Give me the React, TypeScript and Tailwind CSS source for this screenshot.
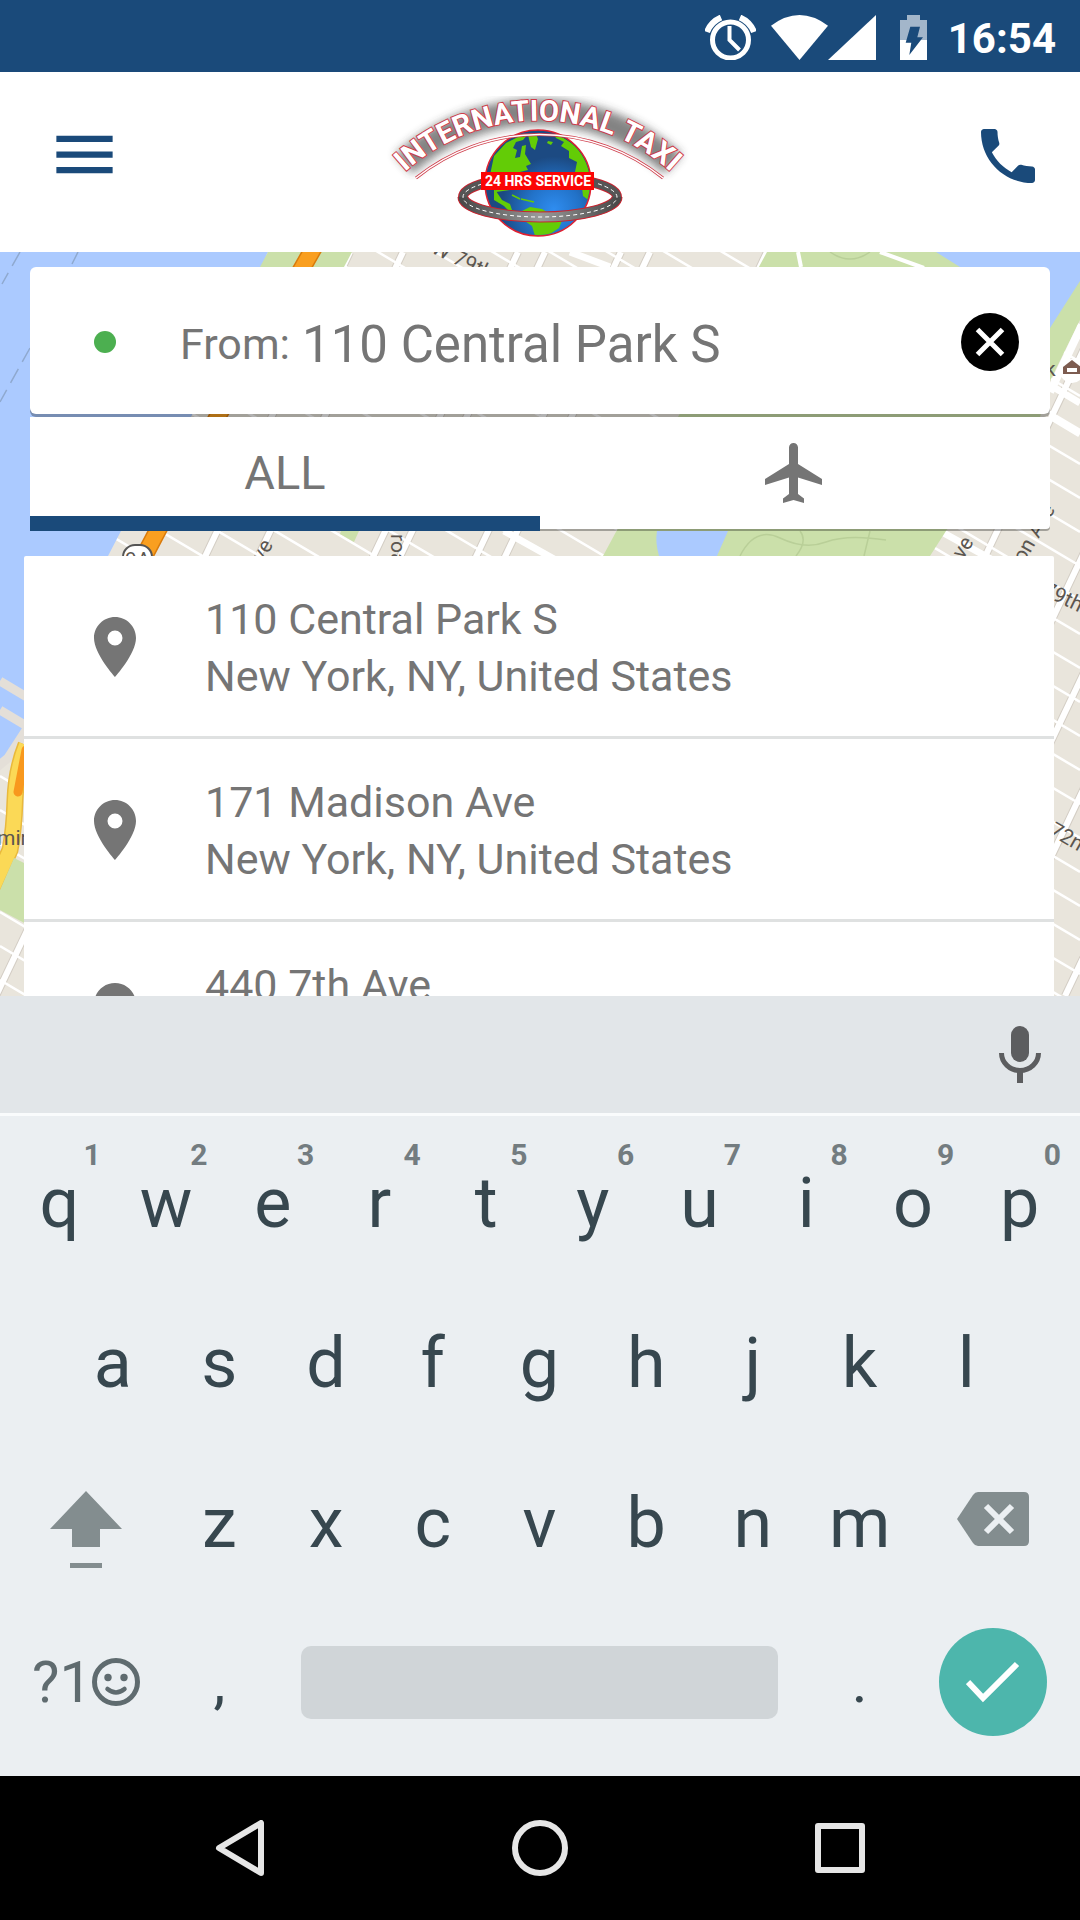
import { useState } from "react";
import type { ReactNode } from "react";
import { MdLocationOn, MdMenu, MdPhone } from "react-icons/md";

type Tab = "all" | "airports";

const PLACES = [
  { street: "110 Central Park S", city: "New York, NY, United States" },
  { street: "171 Madison Ave", city: "New York, NY, United States" },
  { street: "440 7th Ave", city: "New York, NY, United States" }
];

const ROW_1 = ["q", "w", "e", "r", "t", "y", "u", "i", "o", "p"];
const ROW_2 = ["a", "s", "d", "f", "g", "h", "j", "k", "l"];
const ROW_3 = ["z", "x", "c", "v", "b", "n", "m"];

function StatusBar() {
  return (
    <div className="flex h-[72px] shrink-0 items-center justify-end bg-[#1a4a7a] pt-0.5 pr-6 text-white">
      <svg width="51" height="45" viewBox="0 0 51 45" fill="none" stroke="currentColor" aria-hidden>
        <circle cx="25.5" cy="25" r="18" strokeWidth="5" />
        <path d="M24.500 11v14l10 10" strokeWidth="4" />
        <path d="M2 17A26 26 0 0 1 16 2.500M49 17A26 26 0 0 0 35 2.500" strokeWidth="6" />
      </svg>
      <svg className="ml-[15px]" width="57" height="45" viewBox="0 0 57 45" fill="currentColor" aria-hidden>
        <path d="M0 10.700Q28.500-10.700 57 10.700L28.500 45Z" />
      </svg>
      <svg width="48" height="45" viewBox="0 0 48 45" fill="currentColor" aria-hidden>
        <path d="M48 0v45H0Z" />
      </svg>
      <svg className="ml-6" width="27" height="45" viewBox="0 0 27 45" fill="currentColor" aria-hidden>
        <path d="M7 0h13v5h7v20H0V5h7Z" opacity="0.6" />
        <path d="M0 25h27v20H0Z" />
        <path d="M10.300 11.700H20L17.300 22.300H23L9.300 40l2-12.300H5.700Z" fill="#1a4a7a" />
      </svg>
      <span className="ml-[21px] pt-1 text-[42px] leading-[60px] font-bold">16:54</span>
    </div>
  );
}

function Logo() {
  return (
    <svg width="340" height="170" viewBox="0 0 340 170" role="img" aria-label="International Taxi">
      <defs>
        <radialGradient id="sea" cx="0.65" cy="0.75" r="0.5">
          <stop offset="0" stopColor="#2f8df0" />
          <stop offset="0.5" stopColor="#2272c8" />
          <stop offset="1" stopColor="#1c4a82" />
        </radialGradient>
        <linearGradient id="road" x1="0" x2="1" y1="0" y2="0">
          <stop offset="0" stopColor="#4a4a4a" />
          <stop offset="0.5" stopColor="#9a9a9a" />
          <stop offset="1" stopColor="#4a4a4a" />
        </linearGradient>
        <filter id="glow" x="-10%" y="-30%" width="120%" height="160%">
          <feGaussianBlur stdDeviation="5" />
        </filter>
        <clipPath id="globe">
          <circle cx="168" cy="103" r="52" />
        </clipPath>
        <path id="arch" d="M32 95A197 197 0 0 1 304 95" />
      </defs>

      <path d="M34 84A200 200 0 0 1 303 84" fill="none" stroke="#333" strokeWidth="26" opacity="0.6" filter="url(#glow)" />

      <ellipse cx="170" cy="117" rx="77" ry="20" fill="none" stroke="#c8232f" strokeWidth="10" />
      <ellipse cx="170" cy="117" rx="77" ry="20" fill="none" stroke="#555" strokeWidth="8" />
      <circle cx="168" cy="103" r="53" fill="url(#sea)" stroke="#e02030" strokeWidth="1.5" />
      <g clipPath="url(#globe)" fill="#63cc06">
        <path d="M120 95L124 76 136 63 150 56 158 54 153 60 146 62 143 68 147 70 145 78 150 77 152 66 156 65 155 74 161 84 156 86 158 90 150 92 150 104 140 110 126 112Z" />
        <path d="M158 55L166 54 168 59 165 70 161 67ZM178 61l5 1-2 3-4-2Z" />
        <path d="M184 54q18 6 30 22l7 16v30l-8-6-2-16-6-8 2-10-8-4 0-7-8-5 3-4-8-4Z" />
        <path d="M124 108l8 12 8 4 2 6 10 3v4l-10-3-8-8-10-6Z" />
        <path d="M142 115l8 4M151 119l13 3" stroke="#63cc06" strokeWidth="1.5" />
        <path d="M152 131l8-4 12 2 10 6 11 3-4 10-9 6-7 8-8-6-3-10-10-7Z" />
      </g>
      <path d="M93 117C93 128 128 137 170 137S247 128 247 117" fill="none" stroke="#c8232f" strokeWidth="11" />
      <path d="M93 117C93 128 128 137 170 137S247 128 247 117" fill="none" stroke="url(#road)" strokeWidth="9" />
      <path d="M112 104Q93 110 93 117C93 128 128 137 170 137S247 128 247 117Q247 110 226 103" fill="none" stroke="#fff" strokeWidth="1" strokeDasharray="4 3" />

      <rect x="111" y="92" width="113" height="18" fill="#fb0505" />
      <text x="168" y="106" textAnchor="middle" fontFamily="Roboto, sans-serif" fontWeight="700" fontSize="14" fill="#fff">
        24 HRS SERVICE
      </text>

      <path d="M46 98A197 197 0 0 1 293 98" fill="none" stroke="#cf3b49" strokeWidth="3" />
      <path d="M46 98A197 197 0 0 1 293 98" fill="none" stroke="#fff" strokeWidth="1.5" />
      <text
        fontFamily="Roboto, sans-serif"
        fontWeight="700"
        fontSize="29"
        fill="#fff"
        stroke="#cf3b49"
        strokeWidth="2"
        paintOrder="stroke"
        textAnchor="middle"
      >
        <textPath href="#arch" startOffset="50%">
          INTERNATIONAL TAXI
        </textPath>
      </text>
    </svg>
  );
}

function Header() {
  return (
    <header className="grid h-[180px] shrink-0 grid-cols-[1fr_auto_1fr] items-center bg-white px-9 text-[#1a4a7a]">
      <button type="button" aria-label="Menu" className="justify-self-start pb-4 pl-[11px]">
        <MdMenu size={75} />
      </button>
      <div className="pt-1.5">
        <Logo />
      </div>
      <button type="button" aria-label="Call" className="justify-self-end pb-3">
        <MdPhone size={72} />
      </button>
    </header>
  );
}

// Streets run down to the right, avenues up to the right.
const STREETS = Array.from({ length: 44 }, (_, i) => -380 + i * 34);
const AVENUES = [240, 350, 403, 518, 545, 621, 650, 767, 1130, 1227, 1284, 1339, 1419];

function CityMap() {
  return (
    <svg
      className="absolute inset-0 size-full"
      viewBox="0 252 1080 744"
      preserveAspectRatio="xMidYMin slice"
      fontFamily="Roboto, sans-serif"
      fontSize="21"
      fill="#5b5650"
      aria-hidden
    >
      <rect y="252" width="1080" height="744" fill="#e9e5dc" />
      <g stroke="#d3cdc4" fill="none">
        {AVENUES.map((x) => (
          <path key={x} d={`M${x} 252L${x - 354} 996`} strokeWidth="8" />
        ))}
      </g>
      <g stroke="#fff" fill="none">
        {STREETS.map((y) => (
          <path key={y} d={`M0 ${y}L1080 ${y + 640}`} strokeWidth="2.5" />
        ))}
        {AVENUES.map((x) => (
          <path key={x} d={`M${x} 252L${x - 354} 996`} strokeWidth="6" />
        ))}
        <path d="M570 252l40 15M504 531l50 28M940 531l60 33M1050 385l30 18M1050 416l30 18" strokeWidth="7" />
      </g>

      <path d="M767 252H1080V320L1048 385 1040 417 946 531 930 556H603Z" fill="#cbe0aa" />
      <path d="M798 252l3 15M880 252l44 16" stroke="#fff" strokeWidth="4" />
      <path d="M830 252q20 14 40 0M740 556q15-30 40-18t46 4 60-2M870 531l-6 25M800 531q8 10-4 25" fill="none" stroke="#b9cf98" strokeWidth="1.5" />
      <path d="M936 252H1080V281L1050 328Q1020 290 960 267Z" fill="#abcaff" />
      <path d="M657 531h71l-11 25h-58q-4-14-2-25Z" fill="#abcaff" />
      <path d="M341 531h18l-5 11-14-8Z" fill="#cbe0aa" />
      <path d="M1082 325L1050 392" stroke="#fff" strokeWidth="8" />

      <path d="M0 252H268L191 417 121 531 108 556 24 740 8 762 0 766Z" fill="#abcaff" />
      <path d="M268 252h84l-8 15h-84Z" fill="#cbe0aa" />
      <path d="M20 252L2 284M78 252l-6 12M30 348L0 402" stroke="#8fa9cf" strokeWidth="1.5" strokeDasharray="16 8" />
      <path d="M0 681l30 18M0 710l30 18M-4 768L8 758 30 724" fill="none" stroke="#e4dfd8" strokeWidth="9" />
      <path d="M26 745Q16 770 15 800T10 850L-8 890" fill="none" stroke="#e9b93c" strokeWidth="17" />
      <path d="M26 745Q16 770 15 800T10 850L-8 890" fill="none" stroke="#fbd956" strokeWidth="14" />
      <path d="M26 750L18 792" stroke="#f8981d" strokeWidth="9" strokeLinecap="round" />
      <path d="M0 890L14 858 30 866V926L0 910Z" fill="#cbe0aa" />
      <path d="M321 235L219 414 139 566" fill="none" stroke="#d97b0c" strokeWidth="18" />
      <path d="M321 235L219 414 139 566" fill="none" stroke="#f99f20" strokeWidth="15" />

      <rect x="123" y="545" width="29" height="28" rx="12" fill="#fff" stroke="#555" strokeWidth="2" />
      <text x="125" y="567">9A</text>
      <text transform="translate(430 252) rotate(26)">W 79th St</text>
      <text transform="translate(263 563) rotate(-60)">ve</text>
      <text transform="translate(391 534) rotate(90)">roadway</text>
      <text transform="translate(963 560) rotate(-58)">ve</text>
      <text transform="translate(1024 564) rotate(-60)">on Ave</text>
      <text x="1045" y="376">k</text>
      <text x="-3" y="845">min</text>
      <text transform="translate(1041 594) rotate(26)">79th St</text>
      <text transform="translate(1048 834) rotate(30)">72nd St</text>
      <circle cx="1072" cy="371" r="12" fill="#fff" />
      <path d="M1063 367l9-7 9 7v7h-18Z" fill="#7d5c50" />
      <path d="M1067 368h10v4h-10Z" fill="#fff" />
    </svg>
  );
}

function PickupForm() {
  const [from, setFrom] = useState("110 Central Park S");

  return (
    <div className="relative flex h-[147px] items-center rounded-md bg-white pt-[3px] pr-[31px] pl-16 text-[#757575] shadow-[0_3px_0_rgba(0,0,0,0.3)]">
      <span className="size-[22px] shrink-0 rounded-full bg-[#4caf50]" />
      <label htmlFor="from" className="ml-16 pt-1 text-[43px] leading-[60px]">
        From:
      </label>
      <input
        id="from"
        type="text"
        value={from}
        onChange={(e) => setFrom(e.target.value)}
        className="ml-3 h-20 min-w-0 flex-1 bg-transparent pt-1 text-[51px] outline-none"
      />
      <button type="button" aria-label="Clear" onClick={() => setFrom("")}>
        <svg width="58" height="58" viewBox="0 0 58 58" aria-hidden>
          <circle cx="29" cy="29" r="29" fill="#000" />
          <path d="M16.500 16.500l25 25M41.500 16.500l-25 25" stroke="#fff" strokeWidth="5" />
        </svg>
      </button>
    </div>
  );
}

function Tabs({ tab, onChange }: { tab: Tab; onChange: (tab: Tab) => void }) {
  const items: { value: Tab; label: string; content: ReactNode }[] = [
    { value: "all", label: "All", content: "ALL" },
    {
      value: "airports",
      label: "Airports",
      content: (
        <svg width="72" height="72" viewBox="0 0 24 24" fill="currentColor" aria-hidden>
          <path d="M21 16v-2l-8-5V3.500c0-.83-.67-1.500-1.500-1.500S10 2.670 10 3.500V9l-8 5v2l8-2.500V19l-2 1.500V22l3.500-1 3.500 1v-1.500L13 19v-5.500l8 2.500z" />
        </svg>
      )
    }
  ];

  return (
    <div role="tablist" className="relative mt-[3px] grid h-28 grid-cols-2 rounded-b-sm bg-white text-[47px] text-[#757575] shadow-[0_2px_0_rgba(0,0,0,0.3)]">
      {items.map((item) => (
        <button
          key={item.value}
          type="button"
          role="tab"
          aria-label={item.label}
          aria-selected={tab === item.value}
          onClick={() => onChange(item.value)}
          className="relative flex items-center justify-center"
        >
          {item.content}
          {tab === item.value && (
            <span className="absolute inset-x-0 -bottom-0.5 h-[15px] bg-[#1a4a7a]" />
          )}
        </button>
      ))}
    </div>
  );
}

function PlaceList() {
  return (
    <ul className="relative mt-[27px] mr-[26px] ml-6 rounded-t-xs bg-white text-[43px] leading-[57px] text-[#757575]">
      {PLACES.map((place) => (
        <li key={place.street} className="border-b-[3px] border-[#dfe1e1]">
          <button type="button" className="flex h-[180px] w-full items-center pt-0.5 pl-[55px] text-left">
            <MdLocationOn size={72} className="shrink-0" />
            <span className="ml-[54px] pt-0.5">
              {place.street}
              <br />
              {place.city}
            </span>
          </button>
        </li>
      ))}
    </ul>
  );
}

function Key({ letter, hint }: { letter: string; hint?: string }) {
  return (
    <button type="button" className="relative col-span-2 h-40 pt-0.5 text-center text-[70px]">
      {letter}
      {hint && (
        <span className="absolute top-4 right-3 text-[30px] leading-[34px] font-bold text-[#737c80]">
          {hint}
        </span>
      )}
    </button>
  );
}

function Keyboard() {
  return (
    <section aria-label="Keyboard" className="shrink-0 bg-[#ebeff2] text-[#37474f]">
      <div className="flex h-[120px] items-center justify-end border-b-[3px] border-[#f9fbfc] bg-[#e2e6e9] pr-[39px]">
        <button type="button" aria-label="Voice input">
          <svg width="42" height="57" viewBox="0 0 42 57" fill="#5c5d5f" aria-hidden>
            <rect x="12" width="18" height="36" rx="9" />
            <path d="M2.500 27A18.500 17.500 0 0 0 39.500 27" fill="none" stroke="#5c5d5f" strokeWidth="5" />
            <path d="M18 45h6v12h-6Z" />
          </svg>
        </button>
      </div>

      <div className="grid grid-cols-20 pt-1.5 pr-[7px] pb-3.5 pl-1.5">
        {ROW_1.map((letter, i) => (
          <Key key={letter} letter={letter} hint={String((i + 1) % 10)} />
        ))}

        <span />
        {ROW_2.map((letter) => (
          <Key key={letter} letter={letter} />
        ))}
        <span />

        <button type="button" aria-label="Shift" className="col-span-3 flex items-center justify-center">
          <svg width="72" height="92" viewBox="0 0 72 92" fill="#838d8f" aria-hidden>
            <path d="M36 15l36 38H50v18H22V53H0ZM20 87h32v5H20Z" />
          </svg>
        </button>
        {ROW_3.map((letter) => (
          <Key key={letter} letter={letter} />
        ))}
        <button type="button" aria-label="Backspace" className="col-span-3 flex items-center justify-center">
          <svg width="72" height="60" viewBox="0 0 72 60" aria-hidden>
            <path d="M0 27L16 3Q18 0 21 0H67Q72 0 72 5V49Q72 54 67 54H21Q18 54 16 51Z" fill="#838d8f" />
            <path d="M29 14l26 26M55 14L29 40" stroke="#ebeff2" strokeWidth="6" />
          </svg>
        </button>

        <button type="button" aria-label="Symbols" className="col-span-3 flex h-40 items-center justify-center text-[58px] text-[#5f6b6f]">
          ?1
          <svg width="48" height="48" viewBox="0 0 48 48" fill="none" stroke="currentColor" aria-hidden>
            <circle cx="24" cy="24" r="21.5" strokeWidth="5" />
            <circle cx="16" cy="19.5" r="3.7" fill="currentColor" stroke="none" />
            <circle cx="32" cy="19.5" r="3.7" fill="currentColor" stroke="none" />
            <path d="M15.500 31q8.500 7 17 0" strokeWidth="4.5" strokeLinecap="round" />
          </svg>
        </button>
        <button type="button" className="col-span-2 text-[60px]">
          ,
        </button>
        <button type="button" aria-label="Space" className="col-span-10 flex items-center px-7">
          <span className="h-[73px] w-full rounded-[10px] bg-[#d0d5d8]" />
        </button>
        <button type="button" className="col-span-2 text-[60px]">
          .
        </button>
        <button type="button" aria-label="Done" className="col-span-3 flex items-center justify-center">
          <span className="flex size-[108px] items-center justify-center rounded-full bg-[#4db6ac]">
            <svg width="54" height="42" viewBox="0 0 54 42" fill="none" stroke="#fff" strokeWidth="6" aria-hidden>
              <path d="M2 21l15 16L51 3" />
            </svg>
          </span>
        </button>
      </div>
    </section>
  );
}

function NavBar() {
  return (
    <nav className="flex h-36 shrink-0 items-center justify-center gap-[244px] bg-black">
      <button type="button" aria-label="Back">
        <svg width="56" height="56" viewBox="0 0 56 56" fill="none" stroke="#e6e6e6" strokeWidth="6" strokeLinejoin="round" aria-hidden>
          <path d="M49 3v50L7 28Z" />
        </svg>
      </button>
      <button type="button" aria-label="Home">
        <svg width="56" height="56" viewBox="0 0 56 56" fill="none" stroke="#e6e6e6" strokeWidth="6" aria-hidden>
          <circle cx="28" cy="28" r="25" />
        </svg>
      </button>
      <button type="button" aria-label="Recent apps">
        <svg width="56" height="56" viewBox="0 0 56 56" fill="none" stroke="#e6e6e6" strokeWidth="6" strokeLinejoin="round" aria-hidden>
          <rect x="6" y="6" width="44" height="44" />
        </svg>
      </button>
    </nav>
  );
}

export default function App() {
  const [tab, setTab] = useState<Tab>("all");

  return (
    <div className="flex h-screen flex-col overflow-hidden bg-white font-[Roboto,sans-serif]">
      <StatusBar />
      <Header />
      <main className="relative min-h-0 flex-1 overflow-hidden">
        <CityMap />
        <div className="mx-[30px] pt-[15px]">
          <PickupForm />
          <Tabs tab={tab} onChange={setTab} />
        </div>
        <PlaceList />
      </main>
      <Keyboard />
      <NavBar />
    </div>
  );
}
